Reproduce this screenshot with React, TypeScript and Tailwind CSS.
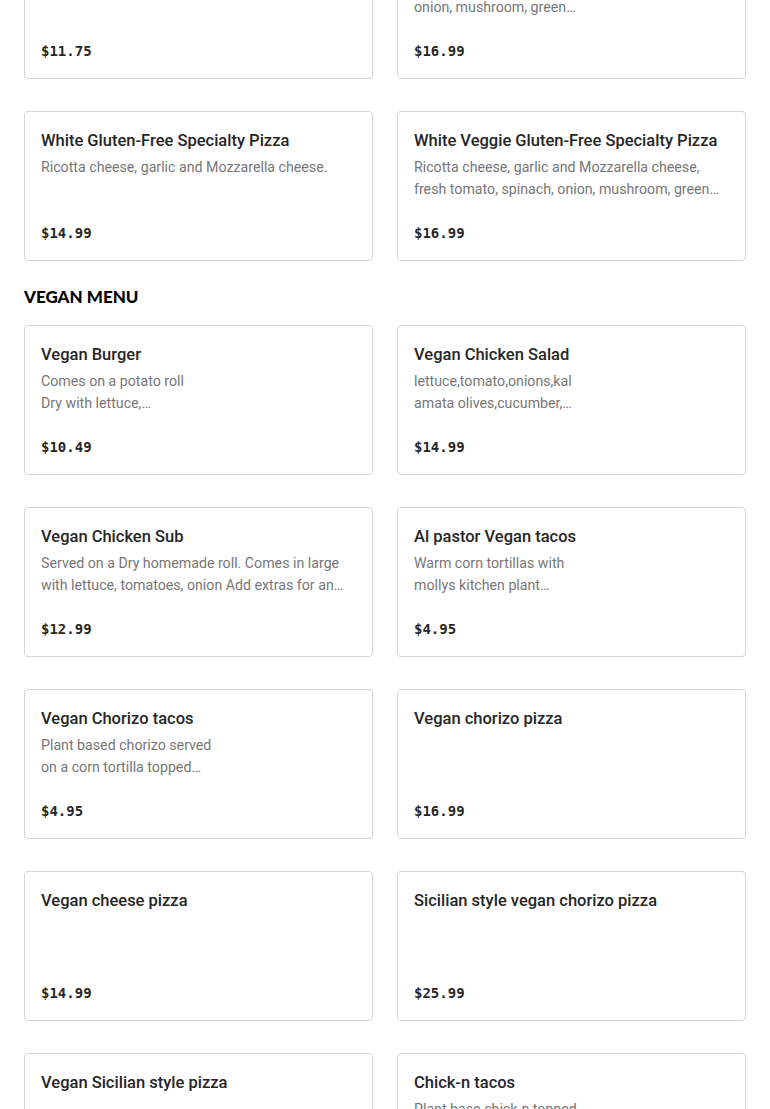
type Item = {
    name: string;
    description?: string;
    price: string;
};

const specialtyItems: Item[] = [
    {
        name: "Gluten-Free Cheese Pizza",
        description: "",
        price: "$11.75",
    },
    {
        name: "Veggie Gluten-Free Specialty Pizza",
        description: "Mozzarella cheese, fresh tomato, spinach,\nonion, mushroom, green\npeppers and black olives.",
        price: "$16.99",
    },
    {
        name: "White Gluten-Free Specialty Pizza",
        description: "Ricotta cheese, garlic and Mozzarella cheese.",
        price: "$14.99",
    },
    {
        name: "White Veggie Gluten-Free Specialty Pizza",
        description: "Ricotta cheese, garlic and Mozzarella cheese,\nfresh tomato, spinach, onion, mushroom, green\npeppers and black olives.",
        price: "$16.99",
    },
];

const veganItems: Item[] = [
    {
        name: "Vegan Burger",
        description: "Comes on a potato roll\nDry with lettuce,\ntomato, onion and pickles",
        price: "$10.49",
    },
    {
        name: "Vegan Chicken Salad",
        description: "lettuce,tomato,onions,kal\namata olives,cucumber,\nvegan chicken",
        price: "$14.99",
    },
    {
        name: "Vegan Chicken Sub",
        description: "Served on a Dry homemade roll. Comes in large with lettuce, tomatoes, onion Add extras for an additional charge.",
        price: "$12.99",
    },
    {
        name: "Al pastor Vegan tacos",
        description: "Warm corn tortillas with\nmollys kitchen plant\nbased al pastor",
        price: "$4.95",
    },
    {
        name: "Vegan Chorizo tacos",
        description: "Plant based chorizo served\non a corn tortilla topped\nwith onion and cilantro",
        price: "$4.95",
    },
    { name: "Vegan chorizo pizza", price: "$16.99" },
    { name: "Vegan cheese pizza", price: "$14.99" },
    { name: "Sicilian style vegan chorizo pizza", price: "$25.99" },
    { name: "Vegan Sicilian style pizza", price: "$22.99" },
    {
        name: "Chick-n tacos",
        description: "Plant base chick-n topped\nwith onion and cilantro\non corn tortillas",
        price: "$4.95",
    },
];

function MenuCard({ item }: { item: Item }) {
    return (
        <div className="flex h-[150px] flex-col rounded-[4px] border border-[#d6d6d6] bg-white px-4 pt-[17px] pb-[15px]">
            <h3
                className="text-[16.5px] font-medium leading-6 text-[#262626]"
                style={{ fontFamily: "Roboto, 'Liberation Sans', sans-serif" }}
            >
                {item.name}
            </h3>
            {item.description ? (
                <p
                    className="mt-[3px] line-clamp-2 whitespace-pre-line text-[14.2px] leading-[22px] text-[#777777]"
                    style={{ fontFamily: "Roboto, 'Liberation Sans', sans-serif" }}
                >
                    {item.description}
                </p>
            ) : null}
            <span
                className="mt-auto text-sm font-bold leading-6 text-[#262626]"
                style={{ fontFamily: "'DejaVu Sans Mono', 'Liberation Mono', monospace" }}
            >
                {item.price}
            </span>
        </div>
    );
}

export default function App() {
    return (
        <div className="min-h-screen overflow-hidden bg-white">
            <div className="-mt-[71px] px-6 pb-10">
                {/* Specialty pizzas (scrolled past) */}
                <div className="grid grid-cols-2 gap-x-6 gap-y-8">
                    {specialtyItems.map((item) => (
                        <MenuCard key={item.name} item={item} />
                    ))}
                </div>

                {/* Vegan menu */}
                <h2
                    className="mt-[25px] mb-[17px] text-[17px] font-black uppercase leading-[22px] text-black"
                    style={{ fontFamily: "Lato, 'Liberation Sans', sans-serif" }}
                >
                    Vegan Menu
                </h2>
                <div className="grid grid-cols-2 gap-x-6 gap-y-8">
                    {veganItems.map((item) => (
                        <MenuCard key={item.name} item={item} />
                    ))}
                </div>
            </div>
        </div>
    );
}
